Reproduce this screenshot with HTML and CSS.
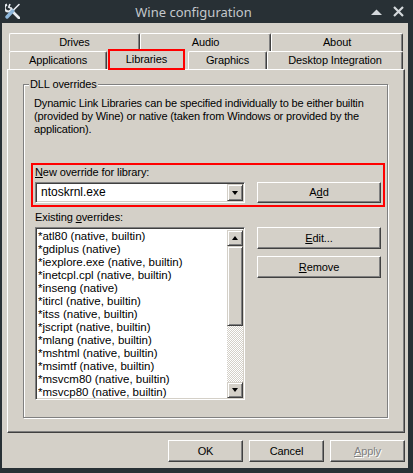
FILE: index.html
```html
<!DOCTYPE html>
<html>
<head>
<meta charset="utf-8">
<title>Wine configuration</title>
<link rel="stylesheet" href="styles.css">
</head>
<body>
<div class="window">
  <div class="titlebar">
    <svg class="app-icon" width="15" height="16" viewBox="0 0 15 16">
      <path d="M8.5 9.5 L14 15" stroke="#e8ecf0" stroke-width="2.6" stroke-linecap="round"/>
      <path d="M2 1.5 A3.6 3.6 0 1 0 6.6 6.2 L8.8 8.8" stroke="#e8ecf0" stroke-width="2.2" fill="none"/>
      <path d="M5 1 L3.8 4.2 L6 5.2" stroke="#e8ecf0" stroke-width="1.6" fill="none"/>
      <path d="M14 1.5 L8 7.5" stroke="#e8ecf0" stroke-width="1.6" stroke-linecap="round"/>
      <path d="M7.6 8 L2 14" stroke="#8fb8dc" stroke-width="3.4" stroke-linecap="round"/>
    </svg>
    <div class="title">Wine configuration</div>
    <div class="tb-btn">
      <svg width="11" height="6" viewBox="0 0 11 6"><path d="M0 6 L5.5 0.5 L11 6 Z" fill="#d4d8dc"/></svg>
    </div>
    <div class="tb-btn">
      <svg width="11" height="11" viewBox="0 0 11 11"><path d="M1 1 L10 10 M10 1 L1 10" stroke="#d4d8dc" stroke-width="2.2"/></svg>
    </div>
  </div>

  <div class="client">
    <div class="tabrow back">
      <div class="tab w-drives">Drives</div>
      <div class="tab w-audio">Audio</div>
      <div class="tab w-about">About</div>
    </div>
    <div class="tabrow front">
      <div class="tab w-apps">Applications</div>
      <div class="tab selected">Libraries</div>
      <div class="tab w-graphics">Graphics</div>
      <div class="tab w-desktop">Desktop Integration</div>
    </div>

    <div class="panel">
      <div class="group">
        <span class="group-label">DLL overrides</span>
        <p class="desc">Dynamic Link Libraries can be specified individually to be either builtin<br>(provided by Wine) or native (taken from Windows or provided by the<br>application).</p>

        <div class="ovr">
          <label class="lbl"><u>N</u>ew override for library:</label>
          <span></span>
          <div class="combo">
            <span class="combo-text">ntoskrnl.exe</span>
            <div class="mini-btn drop"><span class="tri-down"></span></div>
          </div>
          <button class="btn add">A<u>d</u>d</button>
        </div>

        <div class="existing">
          <label class="lbl">Existing <u>o</u>verrides:</label>
          <span></span>
          <div class="listbox">
            <ul class="items">
              <li>*atl80 (native, builtin)</li>
              <li>*gdiplus (native)</li>
              <li>*iexplore.exe (native, builtin)</li>
              <li>*inetcpl.cpl (native, builtin)</li>
              <li>*inseng (native)</li>
              <li>*itircl (native, builtin)</li>
              <li>*itss (native, builtin)</li>
              <li>*jscript (native, builtin)</li>
              <li>*mlang (native, builtin)</li>
              <li>*mshtml (native, builtin)</li>
              <li>*msimtf (native, builtin)</li>
              <li>*msvcm80 (native, builtin)</li>
              <li>*msvcp80 (native, builtin)</li>
            </ul>
            <div class="scrollbar">
              <div class="mini-btn sb-btn"><span class="tri-up"></span></div>
              <div class="mini-btn thumb"></div>
              <div class="track"></div>
              <div class="mini-btn sb-btn"><span class="tri-down"></span></div>
            </div>
          </div>
          <div class="side-btns">
            <button class="btn side"><u>E</u>dit...</button>
            <button class="btn side"><u>R</u>emove</button>
          </div>
        </div>
      </div>
    </div>

    <div class="footer">
      <button class="btn foot">OK</button>
      <button class="btn foot">Cancel</button>
      <button class="btn foot disabled"><u>A</u>pply</button>
    </div>
  </div>
</div>
</body>
</html>
```

FILE: styles.css
```css
* { box-sizing: border-box; margin: 0; padding: 0; }
html, body { width: 413px; height: 473px; overflow: hidden; }
body {
  background: #283035;
  font-family: "Liberation Sans", Arial, sans-serif;
  font-size: 11px;
  letter-spacing: -0.1px;
  color: #000;
}
.window {
  width: 413px;
  height: 473px;
  display: flex;
  flex-direction: column;
  background: #283035;
}

/* title bar */
.titlebar {
  height: 23px;
  display: flex;
  align-items: center;
  padding: 0 4px 0 5px;
  color: #c4c8cc;
  letter-spacing: 0;
}
.app-icon { display: block; margin-top: -1px; }
.title {
  flex: 1;
  text-align: center;
  font-family: "Noto Sans", sans-serif;
  font-size: 13px;
  line-height: 16px;
  padding-left: 2px;
}
.tb-btn {
  width: 22px;
  height: 23px;
  display: flex;
  align-items: center;
  justify-content: center;
}

/* client */
.client {
  flex: 1;
  margin: 0 5px 5px 2px;
  background: #d4d0c8;
  display: flex;
  flex-direction: column;
}

/* tabs */
.tabrow {
  display: flex;
  height: 18px;
  padding-left: 7px;
}
.tabrow.back { margin-top: 10px; }
.tab {
  height: 18px;
  border-top: 1px solid #fff;
  border-left: 1px solid #fff;
  border-right: 1px solid #404040;
  border-radius: 2px 2px 0 0;
  box-shadow: inset -1px 0 #808080;
  display: flex;
  align-items: center;
  justify-content: center;
  line-height: 13px;
  background: #d4d0c8;
}
.w-drives { width: 131px; }
.w-audio { width: 131px; }
.w-about { width: 132px; }
.w-apps { width: 98px; }
.w-graphics { width: 79px; }
.w-desktop { width: 136px; }
.tab.selected {
  width: 77px;
  height: 21px;
  margin: -2px 3px 0 1px;
  border: 2px solid #ff0000;
  border-radius: 0;
  box-shadow: none;
  position: relative;
  z-index: 1;
}

/* panel */
.panel {
  margin: 0 3px 0 5px;
  height: 364px;
  border: 1px solid;
  border-color: #fff #404040 #404040 #fff;
  box-shadow: inset -1px -1px #808080;
  padding: 14px 0 0 15px;
}
.group {
  position: relative;
  width: 365px;
  height: 334px;
  border: 1px solid #808080;
  box-shadow: inset 1px 1px #fff, 1px 1px #fff;
  padding: 12px 0 0 11px;
}
.group-label {
  position: absolute;
  left: 5px;
  top: -7px;
  padding: 0 1px;
  background: #d4d0c8;
  line-height: 13px;
}
.desc {
  line-height: 13px;
  margin-left: -1px;
  letter-spacing: -0.15px;
}
.lbl { line-height: 13px; display: block; }

.ovr {
  margin: 27px 0 0 -4px;
  width: 354px;
  border: 2px solid #ff0000;
  padding: 1px 2px 2px;
  display: grid;
  grid-template-columns: 210px 124px;
  column-gap: 12px;
  row-gap: 3px;
}
.combo {
  height: 21px;
  background: #fff;
  border: 1px solid;
  border-color: #808080 #fff #fff #808080;
  box-shadow: inset 1px 1px #404040, inset -1px -1px #d4d0c8;
  display: flex;
  align-items: center;
  padding: 2px 1px 2px 5px;
}
.combo-text { flex: 1; line-height: 13px; font-size: 12px; letter-spacing: 0; }

.mini-btn {
  background: #d4d0c8;
  border: 1px solid;
  border-color: #d4d0c8 #404040 #404040 #d4d0c8;
  box-shadow: inset 1px 1px #fff, inset -1px -1px #808080;
  display: flex;
  align-items: center;
  justify-content: center;
}
.drop { width: 16px; height: 17px; }
.tri-down, .tri-up {
  width: 0; height: 0;
  border-left: 3.5px solid transparent;
  border-right: 3.5px solid transparent;
}
.tri-down { border-top: 4px solid #000; }
.tri-up { border-bottom: 4px solid #000; }

.btn {
  font: inherit;
  letter-spacing: inherit;
  color: #000;
  background: #d4d0c8;
  border: 1px solid;
  border-color: #fff #404040 #404040 #fff;
  box-shadow: inset -1px -1px #808080;
  display: flex;
  align-items: center;
  justify-content: center;
  line-height: 13px;
}
.add { height: 21px; }

.existing {
  margin-top: 4px;
  display: grid;
  grid-template-columns: 210px 124px;
  column-gap: 12px;
  row-gap: 3px;
}
.listbox {
  height: 173px;
  background: #fff;
  border: 1px solid;
  border-color: #808080 #fff #fff #808080;
  box-shadow: inset 1px 1px #404040, inset -1px -1px #d4d0c8;
  padding: 2px 1px 1px 2px;
  display: flex;
}
.items {
  flex: 1;
  list-style: none;
  overflow: hidden;
}
.items li {
  height: 13px;
  line-height: 13px;
  font-size: 11.5px;
  letter-spacing: 0;
  white-space: nowrap;
}
.scrollbar {
  width: 16px;
  display: flex;
  flex-direction: column;
}
.sb-btn { height: 16px; }
.thumb { height: 80px; }
.track {
  flex: 1;
  background: repeating-conic-gradient(#fff 0 25%, #d4d0c8 0 50%) 0 0 / 2px 2px;
}
.side-btns {
  display: flex;
  flex-direction: column;
  gap: 7px;
}
.side { height: 22px; }

.footer {
  display: flex;
  justify-content: flex-end;
  gap: 6px;
  margin: 7px 3px 0 0;
}
.foot { width: 75px; height: 22px; }
.disabled { color: #808080; text-shadow: 1px 1px #fff; }
```
